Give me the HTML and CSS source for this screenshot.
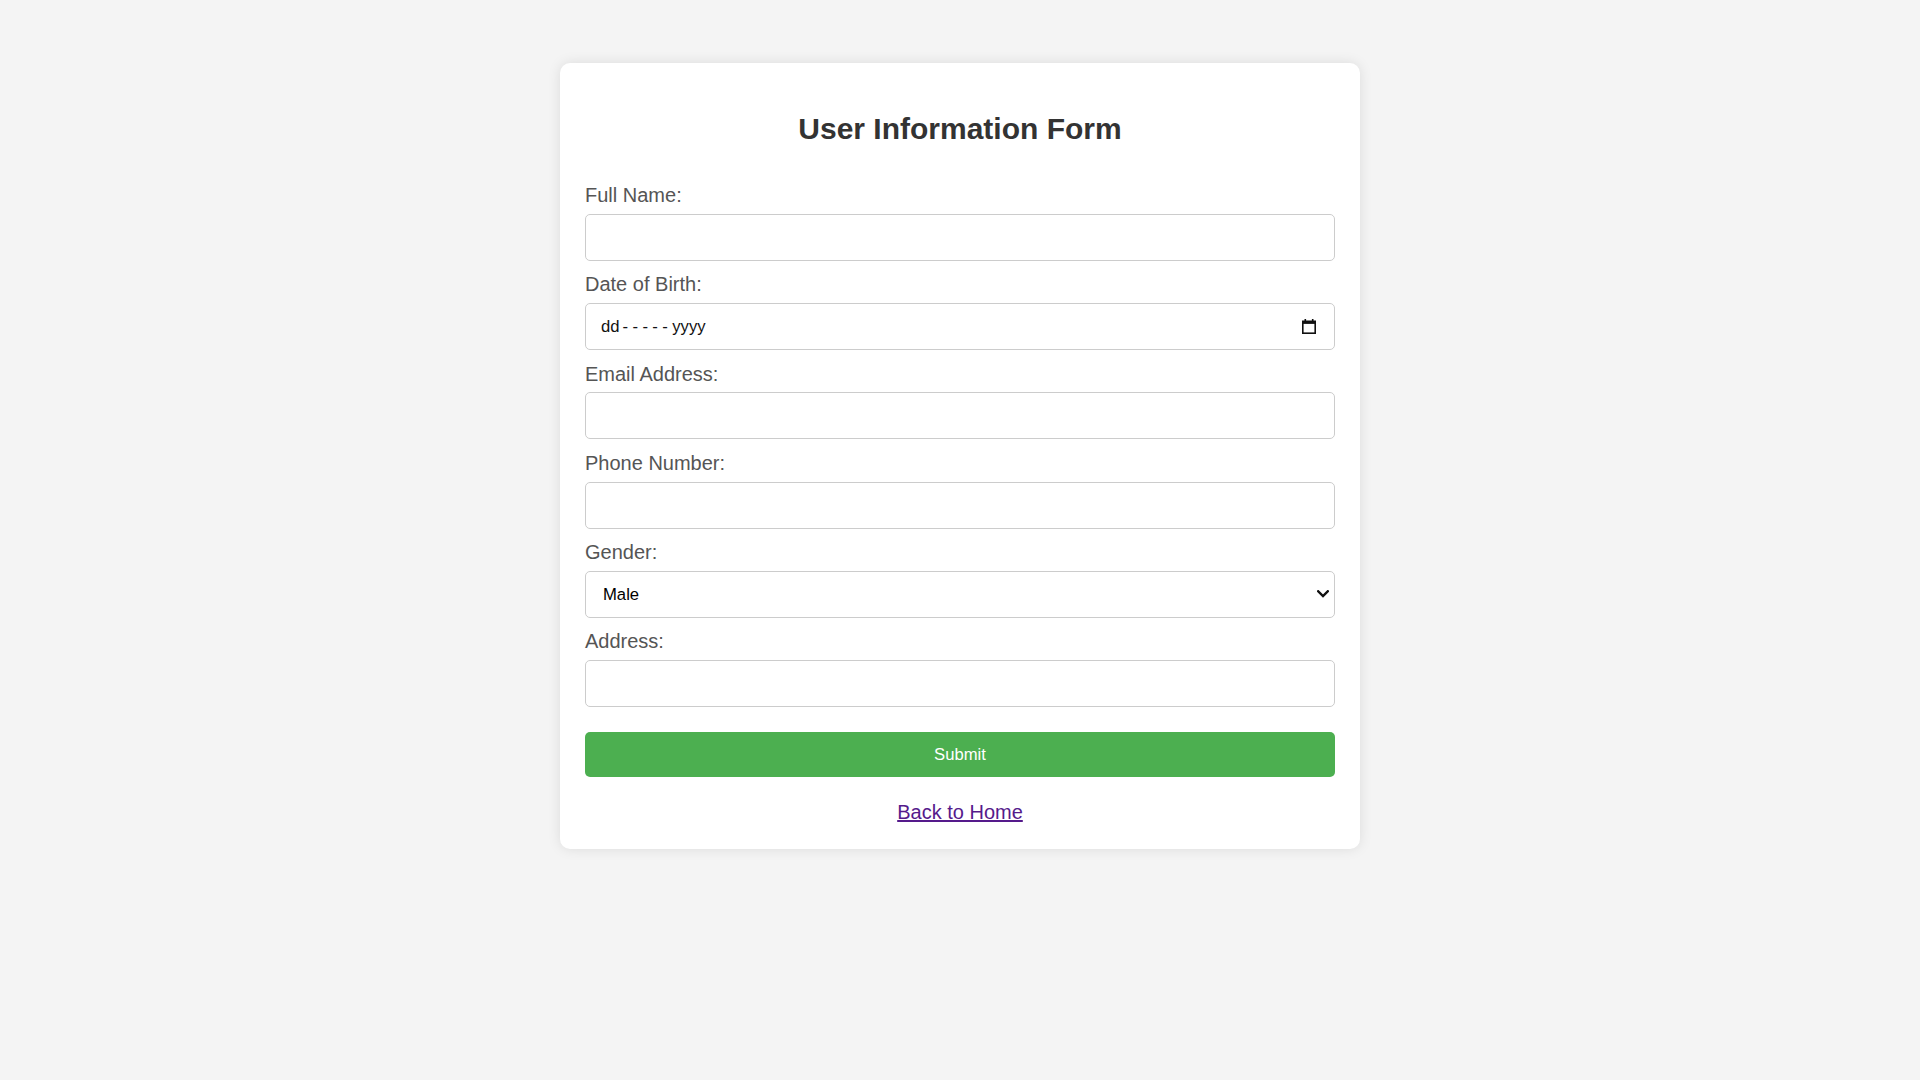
FILE: index.html
```html
<!DOCTYPE html>
<html lang="en">
<head>
<meta charset="utf-8">
<title>User Information Form</title>
<link rel="stylesheet" href="styles.css">
</head>
<body>
<div class="card">
  <h2 class="title">User Information Form</h2>
  <form class="form">
    <div class="field">
      <label class="label" for="name">Full Name:</label>
      <input class="control" type="text" id="name">
    </div>
    <div class="field">
      <label class="label" for="dob">Date of Birth:</label>
      <div class="control date-control" id="dob">
        <span class="date-text">dd<span class="dashes">-----</span>yyyy</span>
        <svg class="cal-icon" width="14" height="15" viewBox="0 0 14 15" aria-hidden="true">
          <rect x="2.5" y="0" width="1.6" height="3" fill="#111"/>
          <rect x="9.9" y="0" width="1.6" height="3" fill="#111"/>
          <rect x="0.8" y="2.3" width="12.4" height="11.9" fill="none" stroke="#111" stroke-width="1.6"/>
          <rect x="0.8" y="2.3" width="12.4" height="2.6" fill="#111"/>
        </svg>
      </div>
    </div>
    <div class="field">
      <label class="label" for="email">Email Address:</label>
      <input class="control" type="email" id="email">
    </div>
    <div class="field">
      <label class="label" for="phone">Phone Number:</label>
      <input class="control" type="tel" id="phone">
    </div>
    <div class="field">
      <label class="label" for="gender">Gender:</label>
      <div class="select-wrap">
        <select class="control select" id="gender">
          <option>Male</option>
          <option>Female</option>
          <option>Other</option>
        </select>
        <svg class="chevron" width="12" height="8" viewBox="0 0 12 8" aria-hidden="true">
          <path d="M1.2 1.3 L6 6.1 L10.8 1.3" fill="none" stroke="#111" stroke-width="2.4" stroke-linecap="square"/>
        </svg>
      </div>
    </div>
    <div class="field">
      <label class="label" for="address">Address:</label>
      <input class="control" type="text" id="address">
    </div>
    <button class="submit" type="button">Submit</button>
  </form>
  <div class="back">
    <a class="back-link" href="#">Back to Home</a>
  </div>
</div>
</body>
</html>
```
FILE: styles.css
```css
html, body {
  margin: 0;
  padding: 0;
}

body {
  background: #f4f4f4;
  font-family: "Liberation Sans", Arial, sans-serif;
  padding: 62.5px 0;
}

.card {
  width: 800px;
  box-sizing: border-box;
  margin: 0 auto;
  background: #ffffff;
  padding: 25px;
  border-radius: 10px;
  box-shadow: 0 0 12.5px rgba(0, 0, 0, 0.1);
}

.title {
  margin: 24px 0 26px;
  font-size: 30px;
  font-weight: bold;
  color: #333333;
  text-align: center;
}

.form {
  display: flex;
  flex-direction: column;
}

.field {
  display: flex;
  flex-direction: column;
}

.label {
  display: block;
  margin: 12.5px 0 6.8px;
  font-size: 20px;
  line-height: 23px;
  color: #555555;
}

.control {
  width: 100%;
  box-sizing: border-box;
  height: 47px;
  padding: 12.5px;
  border: 1px solid #cccccc;
  border-radius: 5px;
  font-family: "Liberation Sans", Arial, sans-serif;
  font-size: 16.67px;
  color: #000000;
  background: #ffffff;
  margin: 0;
}

.date-control {
  display: flex;
  align-items: center;
  justify-content: space-between;
  padding: 0 18px 0 15px;
}

.date-text {
  color: #111111;
  font-size: 16.67px;
}

.dashes {
  letter-spacing: 4.4px;
  margin-left: 3px;
}

.cal-icon {
  display: block;
}

.select-wrap {
  position: relative;
}

.select {
  display: block;
  appearance: none;
  -webkit-appearance: none;
  padding: 12.5px 30px 12.5px 17px;
}

.chevron {
  position: absolute;
  right: 6px;
  top: 19.5px;
  pointer-events: none;
}

.submit {
  margin-top: 25px;
  width: 100%;
  height: 44.5px;
  border: none;
  border-radius: 5px;
  background: #4caf50;
  color: #ffffff;
  font-family: "Liberation Sans", Arial, sans-serif;
  font-size: 16.67px;
  padding: 12.5px;
  cursor: pointer;
}

.back {
  margin-top: 24.5px;
  text-align: center;
  font-size: 20px;
  line-height: 23px;
}

.back-link {
  color: #551a8b;
  text-decoration: underline;
}
```
